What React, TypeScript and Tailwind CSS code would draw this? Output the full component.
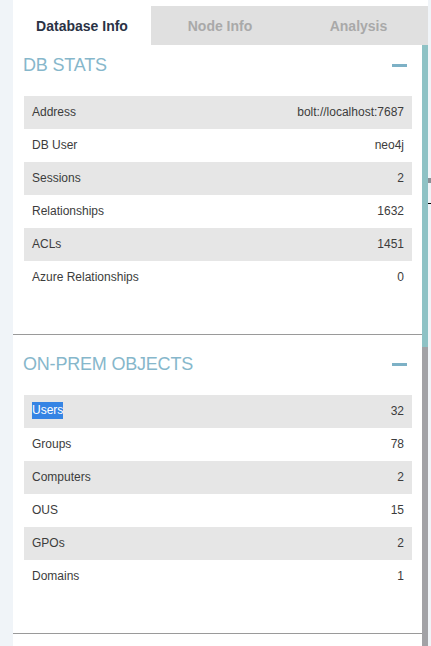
import React from "react";

const dbStats = [
  { label: "Address", value: "bolt://localhost:7687" },
  { label: "DB User", value: "neo4j" },
  { label: "Sessions", value: "2" },
  { label: "Relationships", value: "1632" },
  { label: "ACLs", value: "1451" },
  { label: "Azure Relationships", value: "0" },
];

const onPrem = [
  { label: "Users", value: "32", selected: true },
  { label: "Groups", value: "78" },
  { label: "Computers", value: "2" },
  { label: "OUS", value: "15" },
  { label: "GPOs", value: "2" },
  { label: "Domains", value: "1" },
];

type Row = { label: string; value: string; selected?: boolean };

function Section({ title, rows, first }: { title: string; rows: Row[]; first?: boolean }) {
  return (
    <div className={`border-b border-[#9a9a9a] px-[10px] pb-[40px] ${first ? "pt-[5px]" : "pt-[14px]"}`}>
      <div className="h-[30px] flex items-center justify-between mb-[16px]">
        <h2 className="text-[18px] font-normal text-[#86b7cb] tracking-[-0.2px]">{title}</h2>
        <div className="w-[15px] h-[3px] bg-[#7db1c6] mr-[5px]"></div>
      </div>
      <div className="ml-[1px]">
        {rows.map((row, idx) => (
          <div
            key={row.label}
            className={`h-[33px] flex items-center justify-between pl-[8px] pr-[8px] pb-[2px] text-[12px] text-[#3c3c3c] ${idx % 2 === 0 ? "bg-[#e6e6e6]" : "bg-white"}`}
          >
            {row.selected ? (
              <span className="bg-[#3584e4] text-white leading-[17px]">{row.label}</span>
            ) : (
              <span>{row.label}</span>
            )}
            <span>{row.value}</span>
          </div>
        ))}
      </div>
    </div>
  );
}

export default function App() {
  return (
    <div className="h-[646px] overflow-hidden bg-[#f0f4f8] flex font-['Liberation_Sans',Arial,sans-serif]">
      <div className="w-[13px] shrink-0"></div>

      <div className="w-[415px] shrink-0 bg-white pt-[6px] flex flex-col">
        {/* Tabs */}
        <div className="flex h-[39px] shrink-0 text-[14px] font-bold">
          <div className="w-[138px] pt-[2px] flex items-center justify-center bg-white text-[#2a3245]">Database Info</div>
          <div className="w-[138px] pt-[2px] flex items-center justify-center bg-[#e0e0e0] text-[#a9a9a9]">Node Info</div>
          <div className="flex-1 pt-[2px] flex items-center justify-center bg-[#e0e0e0] text-[#a9a9a9]">Analysis</div>
        </div>

        <div className="flex flex-1">
          <div className="flex-1">
            <Section title="DB STATS" rows={dbStats} first />
            <Section title="ON-PREM OBJECTS" rows={onPrem} />
          </div>
          {/* Scrollbar */}
          <div className="w-[6px] shrink-0 flex flex-col">
            <div className="h-[302px] bg-[#8ec2c5]"></div>
            <div className="flex-1 bg-[#a2a2a6]"></div>
          </div>
        </div>
      </div>

      <div className="w-[3px] shrink-0 flex flex-col">
        <div className="h-[178px]"></div>
        <div className="h-[5px] bg-[#8a9096]"></div>
        <div className="h-[20px]"></div>
        <div className="h-[1px] bg-black"></div>
      </div>
    </div>
  );
}
